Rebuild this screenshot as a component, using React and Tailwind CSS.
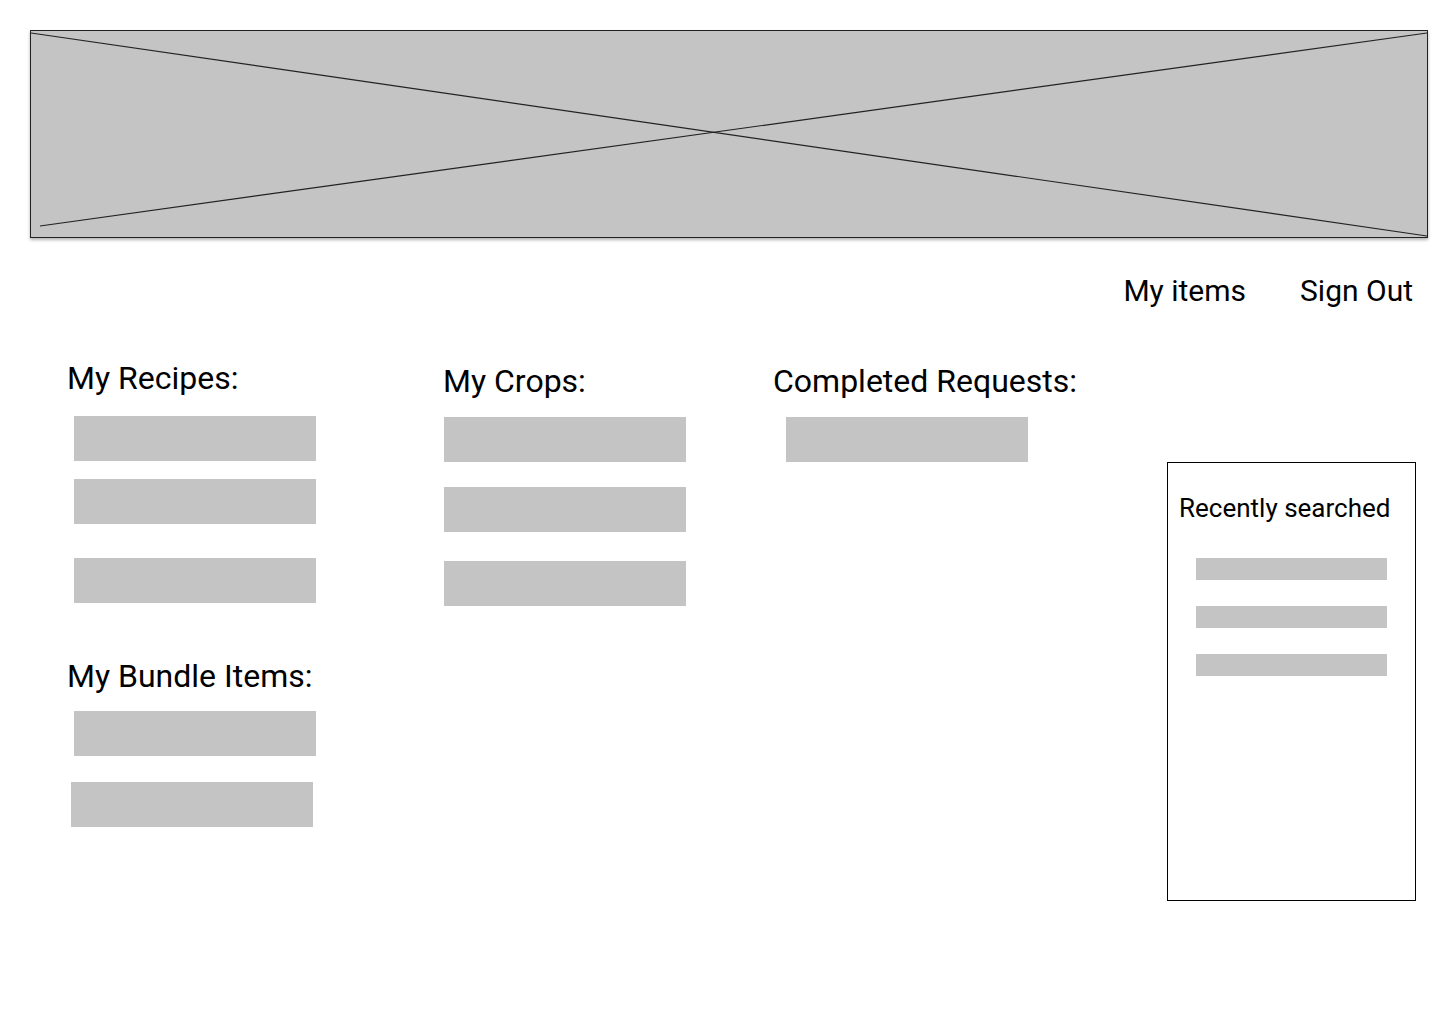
export default function App() {
  const Bar = ({ className = "" }) => (
    <div className={`w-[242px] h-[45px] bg-[#c4c4c4] ${className}`} />
  );
  return (
    <div
      className="w-[1440px] h-[1024px] bg-white text-black overflow-hidden"
      style={{ fontFamily: "Roboto, 'Liberation Sans', sans-serif" }}
    >
      {/* Banner placeholder */}
      <div className="ml-[30px] mt-[30px] w-[1398px] h-[208px] bg-[#c4c4c4] border border-[#222] shadow-[0_2px_3px_rgba(0,0,0,0.3)]">
        <svg
          className="block w-full h-full"
          viewBox="0 0 1396 206"
          preserveAspectRatio="none"
        >
          <line x1="0" y1="2" x2="1396" y2="205" stroke="#222" strokeWidth="1.2" />
          <line x1="9" y1="195" x2="1396" y2="2" stroke="#222" strokeWidth="1.2" />
        </svg>
      </div>

      {/* Nav */}
      <div className="mt-[38px] flex justify-end gap-[54px] pr-[27px] text-[30px] leading-none">
        <span>My items</span>
        <span>Sign Out</span>
      </div>

      {/* Main */}
      <div className="flex items-start pl-[67px] pt-[2px]">
        {/* Column 1 */}
        <div className="w-[377px] mt-[54px] flex flex-col items-start">
          <h2 className="text-[32px] leading-none">My Recipes:</h2>
          <Bar className="ml-[7px] mt-[22px]" />
          <Bar className="ml-[7px] mt-[18px]" />
          <Bar className="ml-[7px] mt-[34px]" />
          <h2 className="text-[32px] leading-none mt-[57px]">My Bundle Items:</h2>
          <Bar className="ml-[7px] mt-[19px]" />
          <Bar className="ml-[4px] mt-[26px]" />
        </div>

        {/* Column 2 */}
        <div className="w-[330px] mt-[57px] flex flex-col items-start">
          <h2 className="text-[32px] leading-none ml-[-1px]">My Crops:</h2>
          <Bar className="mt-[20px]" />
          <Bar className="mt-[25px]" />
          <Bar className="mt-[29px]" />
        </div>

        {/* Column 3 */}
        <div className="w-[393px] mt-[57px] flex flex-col items-start">
          <h2 className="text-[32px] leading-none ml-[-1px]">Completed Requests:</h2>
          <Bar className="ml-[12px] mt-[20px]" />
        </div>

        {/* Sidebar */}
        <div className="mt-[154px] w-[249px] h-[439px] border border-black flex flex-col items-start">
          <div className="ml-[11px] mt-[32px] text-[26px] leading-none">Recently searched</div>
          <div className="ml-[28px] mt-[37px] w-[191px] h-[22px] bg-[#c4c4c4]" />
          <div className="ml-[28px] mt-[26px] w-[191px] h-[22px] bg-[#c4c4c4]" />
          <div className="ml-[28px] mt-[26px] w-[191px] h-[22px] bg-[#c4c4c4]" />
        </div>
      </div>
    </div>
  );
}
